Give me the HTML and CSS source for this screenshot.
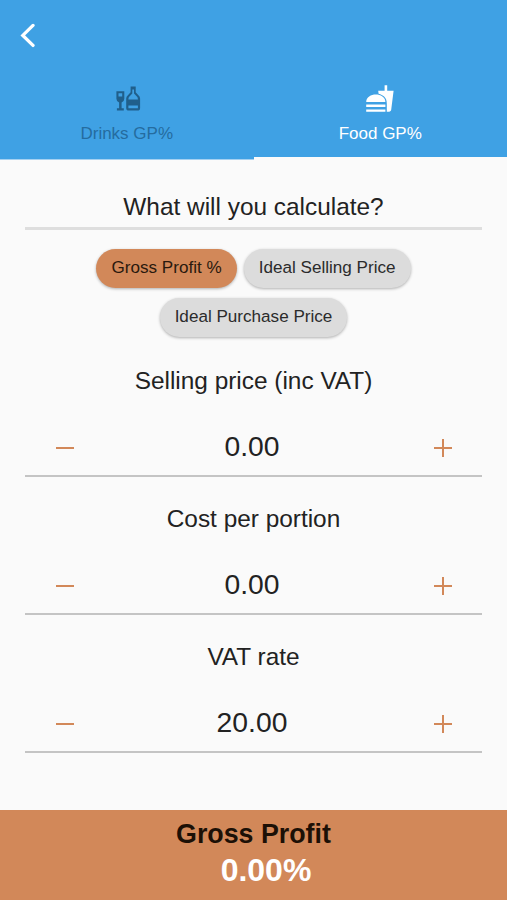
FILE: index.html
```
<!DOCTYPE html>
<html lang="en">
<head>
<meta charset="utf-8">
<title>GP Calculator</title>
<link rel="stylesheet" href="styles.css">
</head>
<body>
<header class="header">
  <div class="toolbar">
    <svg class="back" viewBox="0 0 16 26"><path d="M14 3.4 3.8 13.4l10.2 10" fill="none" stroke="#fff" stroke-width="3.3" stroke-linecap="round"/></svg>
  </div>
  <nav class="tabs">
    <div class="tab">
      <svg class="tab-icon" viewBox="0 0 30 30"><path fill-rule="evenodd" d="M4.4 7.2h7.9v7.6q0 2.8-2.7 3.6v5.8h2.2v2.2H4.9v-2.2h2.2v-5.8Q4.4 17.6 4.4 14.8zM6.5 9.3v3.2h3.7V9.3zM18.6 2.4h5.1v5.8l2.7 3q1.7 1.4 1.7 3.4v9.3q0 2.7-2.7 2.7h-8.5q-2.7 0-2.7-2.7v-9.3q0-2 1.7-3.4l2.7-3zM20.3 5.4v4l-3.1 3.3q-.8.8-.8 2.7h9.5q0-1.9-.8-2.7L22 9.4v-4zM16.4 21.6v2.6h9.5v-2.6z"/></svg>
      <span class="tab-label">Drinks GP%</span>
    </div>
    <div class="tab active">
      <svg class="tab-icon" viewBox="0 0 30 30"><path d="M21.8 27.7h2.3c1.1 0 2-.8 2.1-1.9l2.4-19.1h-6.4V1.2h-2.6v5.5h-6.4l.4 3c2.2.6 4.3 1.7 5.5 2.9 1.9 1.9 2.7 3.9 2.7 7.1zM1.2 25.5v2.2h19.2v-2.2zM20.4 18c0-10-19.2-10-19.2 0zM1.2 20.5h19.2v2.4H1.2z"/></svg>
      <span class="tab-label">Food GP%</span>
    </div>
  </nav>
</header>
<main class="content">
  <h1 class="question">What will you calculate?</h1>
  <div class="chips">
    <span class="chip selected">Gross Profit %</span>
    <span class="chip">Ideal Selling Price</span>
    <span class="chip">Ideal Purchase Price</span>
  </div>
  <section class="field">
    <h2 class="field-label">Selling price (inc VAT)</h2>
    <div class="stepper"><i class="step"></i><span class="value">0.00</span><i class="step plus"></i></div>
  </section>
  <section class="field">
    <h2 class="field-label">Cost per portion</h2>
    <div class="stepper"><i class="step"></i><span class="value">0.00</span><i class="step plus"></i></div>
  </section>
  <section class="field">
    <h2 class="field-label">VAT rate</h2>
    <div class="stepper"><i class="step"></i><span class="value">20.00</span><i class="step plus"></i></div>
  </section>
</main>
<footer class="result">
  <div class="result-label">Gross Profit</div>
  <div class="result-value">0.00%</div>
</footer>
</body>
</html>
```
FILE: styles.css
```
* { box-sizing: border-box; }
body {
  margin: 0;
  height: 900px;
  display: flex;
  flex-direction: column;
  overflow: hidden;
  background: #fafafa;
  color: #222;
  font-family: "Liberation Sans", Arial, sans-serif;
}
h1, h2 { margin: 0; font-weight: 400; }
.header {
  height: 160px;
  display: flex;
  flex-direction: column;
  background: linear-gradient(#3fa1e4 159px, #a5d1f1 159px);
}
.toolbar { height: 70px; padding: 22px 0 0 19px; }
.back { display: block; width: 16px; height: 26px; }
.tabs { flex: 1; display: flex; }
.tab {
  flex: 1;
  display: flex;
  flex-direction: column;
  align-items: center;
  padding-top: 14px;
  color: #256c9f;
  border-bottom: 3px solid transparent;
}
.tab.active { color: #fff; border-color: #fafafa; }
.tab-icon { width: 30px; height: 30px; fill: #205f8b; }
.active .tab-icon { fill: #fff; }
.tab-label { margin-top: 10px; font-size: 17px; line-height: 20px; }
.content { flex: 1; padding: 32px 25px 0; }
.question {
  height: 38px;
  border-bottom: 3px solid #dedede;
  font-size: 24.4px;
  line-height: 30px;
  text-align: center;
}
.chips {
  display: flex;
  flex-wrap: wrap;
  justify-content: center;
  gap: 10px 7px;
  padding: 19px 60px 0;
}
.chip {
  height: 39px;
  padding: 0 15px;
  border-radius: 20px;
  background: #dcdcdc;
  box-shadow: 0 1px 3px rgba(0, 0, 0, .3);
  color: #2b2b2b;
  font-size: 17.1px;
  line-height: 38px;
  white-space: nowrap;
}
.chip.selected { background: #d28859; color: #29190e; }
.field {
  height: 138px;
  border-bottom: 2px solid #c4c4c4;
}
.chips + .field { margin-top: 2px; }
.field-label {
  padding-top: 27px;
  font-size: 24.4px;
  line-height: 30px;
  text-align: center;
}
.stepper {
  display: flex;
  align-items: center;
  justify-content: space-between;
  margin-top: 30px;
  padding: 0 30px 0 31px;
}
.value { font-size: 28.3px; line-height: 40px; margin-right: 4px; }
.step {
  width: 18px;
  height: 18px;
  margin-top: 3px;
  background: linear-gradient(#d28859, #d28859) center / 18px 2px no-repeat;
}
.plus {
  background:
    linear-gradient(#d28859, #d28859) center / 18px 2px no-repeat,
    linear-gradient(#d28859, #d28859) center / 2px 18px no-repeat;
}
.result {
  height: 90px;
  padding-top: 6px;
  background: #d28859;
  font-weight: 700;
  text-align: center;
}
.result-label { font-size: 26.8px; line-height: 36px; color: #1c1006; }
.result-value { font-size: 32px; line-height: 36px; padding-left: 25px; color: #fff; }
```
